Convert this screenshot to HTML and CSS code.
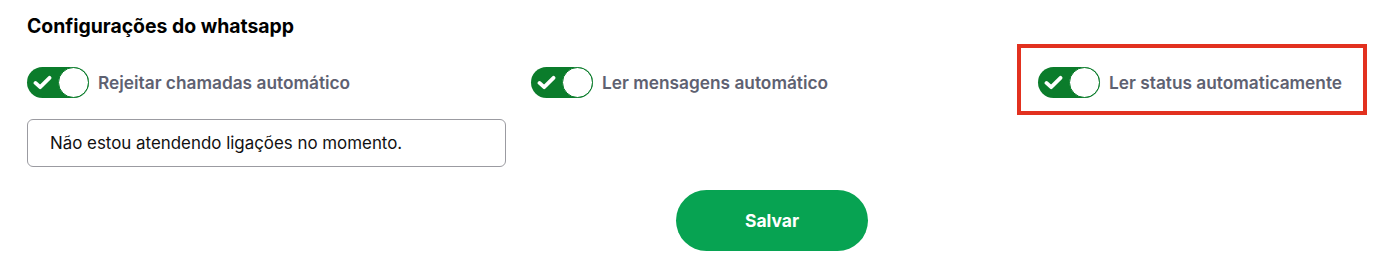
FILE: index.html
```html
<!DOCTYPE html>
<html lang="pt-BR">
<head>
<meta charset="utf-8">
<title>Configurações do whatsapp</title>
<link rel="stylesheet" href="styles.css">
</head>
<body>
<div class="page">
  <h2 class="title">Configurações do whatsapp</h2>
  <div class="toggles">
    <label class="item">
      <span class="switch">
        <svg class="check" viewBox="0 0 20 16" width="19" height="15"><path d="M2.5 8.5 L7.5 13 L17.5 3" fill="none" stroke="#fff" stroke-width="4" stroke-linecap="round" stroke-linejoin="round"/></svg>
        <span class="knob"></span>
      </span>
      <span class="label">Rejeitar chamadas automático</span>
    </label>
    <label class="item">
      <span class="switch">
        <svg class="check" viewBox="0 0 20 16" width="19" height="15"><path d="M2.5 8.5 L7.5 13 L17.5 3" fill="none" stroke="#fff" stroke-width="4" stroke-linecap="round" stroke-linejoin="round"/></svg>
        <span class="knob"></span>
      </span>
      <span class="label">Ler mensagens automático</span>
    </label>
    <label class="item marked">
      <span class="switch">
        <svg class="check" viewBox="0 0 20 16" width="19" height="15"><path d="M2.5 8.5 L7.5 13 L17.5 3" fill="none" stroke="#fff" stroke-width="4" stroke-linecap="round" stroke-linejoin="round"/></svg>
        <span class="knob"></span>
      </span>
      <span class="label">Ler status automaticamente</span>
      <span class="highlight"></span>
    </label>
  </div>
  <div class="field">Não estou atendendo ligações no momento.</div>
  <div class="actions">
    <button class="save" type="button">Salvar</button>
  </div>
</div>
</body>
</html>
```
FILE: styles.css
```css
* { box-sizing: border-box; }
html, body { margin: 0; padding: 0; background: #fff; overflow: hidden; }
body { font-family: Inter, "Noto Sans", Arial, sans-serif; color: #000; }
.page { padding: 13px 0 0 27px; }
.title {
  margin: 0;
  font-size: 19.4px;
  font-weight: 700;
  line-height: 26px;
}
.toggles {
  display: grid;
  grid-template-columns: 504px 507px 1fr;
  margin-top: 28px;
}
.item {
  display: inline-flex;
  align-items: center;
  justify-self: start;
  gap: 9px;
  position: relative;
}
.switch {
  position: relative;
  display: flex;
  align-items: center;
  width: 62px;
  height: 31px;
  border-radius: 16px;
  background: #0b7c2b;
}
.check { margin-left: 6px; }
.knob {
  position: absolute;
  right: 0;
  top: 0;
  width: 31px;
  height: 31px;
  border-radius: 50%;
  background: #fff;
  border: 1.5px solid #0b7c2b;
}
.label {
  font-size: 17.3px;
  font-weight: 600;
  color: #5e6171;
}
.highlight {
  position: absolute;
  top: -23px;
  bottom: -17px;
  left: -21px;
  right: -25px;
  border: 4px solid #e2311f;
  pointer-events: none;
}
.field {
  margin-top: 21px;
  width: 479px;
  height: 48px;
  border: 1px solid #9b9ba1;
  border-radius: 6px;
  padding: 0 22px;
  display: flex;
  align-items: center;
  font-size: 16.9px;
  color: #111;
}
.actions { margin-top: 23px; padding-left: 649px; }
.save {
  width: 192px;
  height: 61px;
  border: none;
  border-radius: 31px;
  background: #07a352;
  color: #fff;
  font-family: Inter, "Noto Sans", Arial, sans-serif;
  font-size: 17.5px;
  font-weight: 700;
}
```
